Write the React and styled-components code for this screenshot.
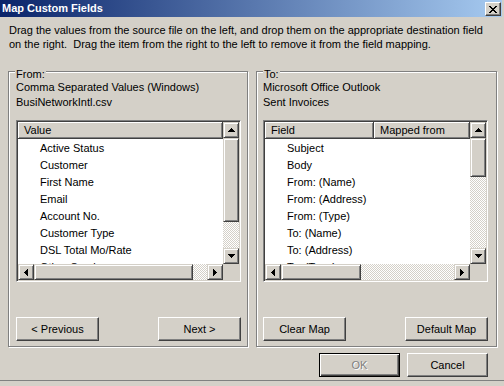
import React from "react";
import styled, { createGlobalStyle } from "styled-components";

const GlobalStyle = createGlobalStyle`
  html, body {
    margin: 0;
    padding: 0;
    background: #d4d0c8;
  }
  body {
    font-family: "Liberation Sans", Arial, sans-serif;
    font-size: 11px;
    color: #000;
  }
`;

const Window = styled.div`
  width: 504px;
  box-sizing: border-box;
  padding-right: 2px;
  background: #d4d0c8;
  border-bottom: 1px solid #808080;
  box-shadow: 0 1px 0 #404040;
  display: flex;
  flex-direction: column;
`;

const TitleBar = styled.div`
  height: 17px;
  display: flex;
  justify-content: space-between;
  padding: 0 1px 0 2px;
  background: linear-gradient(to right, #0a246a, #a6caf0);
  color: #fff;
  font-weight: bold;
  line-height: 17px;
`;

const CloseButton = styled.div`
  width: 16px;
  height: 14px;
  margin-top: 2px;
  box-sizing: border-box;
  background: #d4d0c8;
  border: 1px solid;
  border-color: #fff #404040 #404040 #fff;
  box-shadow: inset -1px -1px #808080;
  display: flex;
  align-items: center;
  justify-content: center;
`;

const Intro = styled.p`
  margin: 0;
  padding: 6px 9px 0;
  line-height: 14px;
`;

const GroupRow = styled.div`
  display: flex;
  gap: 8px;
  margin-top: 20px;
  padding-left: 8px;
`;

const Group = styled.div`
  position: relative;
  width: ${(p) => p.$width}px;
  height: 276px;
  box-sizing: border-box;
  border: 1px solid #808080;
  box-shadow: inset 1px 1px #fff, 1px 1px #fff;
  padding: 8px ${(p) => p.$right}px 5px ${(p) => p.$left}px;
  display: flex;
  flex-direction: column;
`;

const Legend = styled.span`
  position: absolute;
  top: -4px;
  left: 6px;
  padding: 0 1px;
  line-height: 12px;
  background: #d4d0c8;
`;

const SourceLine = styled.div`
  line-height: 15px;
  white-space: nowrap;
`;

const ListBox = styled.div`
  margin-top: 10px;
  height: 162px;
  box-sizing: border-box;
  border: 1px solid;
  border-color: #808080 #fff #fff #808080;
  padding: 1px;
  box-shadow: inset 1px 1px #404040, inset -1px -1px #d4d0c8;
  background: #fff;
  display: grid;
  grid-template-columns: 1fr 16px;
  grid-template-rows: 1fr 16px;
`;

const ListArea = styled.div`
  min-height: 0;
  overflow: hidden;
  display: flex;
  flex-direction: column;
`;

const Header = styled.div`
  display: flex;
  height: 17px;
  flex: none;
  margin-bottom: 1px;
`;

const HeaderCell = styled.div`
  flex: ${(p) => (p.$width ? `0 0 ${p.$width}px` : "1")};
  box-sizing: border-box;
  padding-left: 6px;
  background: #d4d0c8;
  border-right: 1px solid #404040;
  border-bottom: 1px solid #404040;
  box-shadow: inset 1px 1px #fff, inset -1px -1px #808080;
  line-height: 16px;
  white-space: nowrap;
`;

const Item = styled.div`
  height: 17px;
  flex: none;
  line-height: 17px;
  padding-left: 22px;
  white-space: nowrap;
`;

const ScrollBar = styled.div`
  display: flex;
  flex-direction: ${(p) => (p.$vertical ? "column" : "row")};
`;

const ScrollButton = styled.div`
  flex: none;
  width: 16px;
  height: 16px;
  box-sizing: border-box;
  background: #d4d0c8;
  border: 1px solid;
  border-color: #d4d0c8 #404040 #404040 #d4d0c8;
  box-shadow: inset 1px 1px #fff, inset -1px -1px #808080;
  display: flex;
  align-items: center;
  justify-content: center;
`;

const Thumb = styled(ScrollButton)`
  width: ${(p) => (p.$vertical ? "16px" : `${p.$size}px`)};
  height: ${(p) => (p.$vertical ? `${p.$size}px` : "16px")};
`;

const Track = styled.div`
  flex: 1;
  background-color: #fff;
  background-image: conic-gradient(#d4d0c8 25%, #fff 0 50%, #d4d0c8 0 75%, #fff 0);
  background-size: 2px 2px;
`;

const Corner = styled.div`
  background: #d4d0c8;
`;

const ButtonRow = styled.div`
  margin-top: auto;
  display: flex;
  justify-content: space-between;
`;

const Button = styled.div`
  width: ${(p) => p.$width}px;
  height: 24px;
  box-sizing: border-box;
  background: #d4d0c8;
  border: 1px solid;
  border-color: ${(p) => (p.$default ? "#000" : "#fff #404040 #404040 #fff")};
  box-shadow: ${(p) =>
    p.$default
      ? "inset 1px 1px #fff, inset -1px -1px #404040, inset -2px -2px #808080"
      : "inset -1px -1px #808080"};
  color: ${(p) => (p.$disabled ? "#808080" : "#000")};
  text-shadow: ${(p) => (p.$disabled ? "1px 1px #fff" : "none")};
  display: flex;
  align-items: center;
  justify-content: center;
  white-space: nowrap;
`;

const Footer = styled.div`
  display: flex;
  justify-content: flex-end;
  gap: 7px;
  padding: 6px 14px 3px 0;
`;

const arrowPaths = {
  up: { w: 7, h: 4, d: "M3 0h1v1h1v1h1v1h1v1H0V3h1V2h1V1h1z" },
  down: { w: 7, h: 4, d: "M0 0h7v1H6v1H5v1H4v1H3V3H2V2H1V1H0z" },
  left: { w: 4, h: 7, d: "M3 0h1v7H3V6H2V5H1V4H0V3h1V2h1V1h1z" },
  right: { w: 4, h: 7, d: "M0 0h1v1h1v1h1v1h1v1H3v1H2v1H1v1H0z" },
};

const Arrow = ({ dir }) => {
  const a = arrowPaths[dir];
  return (
    <svg width={a.w} height={a.h} viewBox={`0 0 ${a.w} ${a.h}`} shapeRendering="crispEdges">
      <path d={a.d} fill="#000" />
    </svg>
  );
};

const CloseGlyph = () => {
  const rows = ["XX....XX", ".XX..XX.", "..XXXX..", "...XX...", "..XXXX..", ".XX..XX.", "XX....XX"];
  return (
    <svg width="8" height="7" viewBox="0 0 8 7" shapeRendering="crispEdges">
      {rows.flatMap((r, y) =>
        r.split("").map((c, x) => (c === "X" ? <rect key={`${x}-${y}`} x={x} y={y} width="1" height="1" fill="#000" /> : null))
      )}
    </svg>
  );
};

const VScroll = ({ thumb }) => (
  <ScrollBar $vertical>
    <ScrollButton>
      <Arrow dir="up" />
    </ScrollButton>
    <Thumb $vertical $size={thumb} />
    <Track />
    <ScrollButton>
      <Arrow dir="down" />
    </ScrollButton>
  </ScrollBar>
);

const HScroll = ({ thumb }) => (
  <ScrollBar>
    <ScrollButton>
      <Arrow dir="left" />
    </ScrollButton>
    <Thumb $size={thumb} />
    <Track />
    <ScrollButton>
      <Arrow dir="right" />
    </ScrollButton>
  </ScrollBar>
);

const FieldList = ({ columns, items, vThumb, hThumb }) => (
  <ListBox>
    <ListArea>
      <Header>
        {columns.map((c) => (
          <HeaderCell key={c.label} $width={c.width}>
            {c.label}
          </HeaderCell>
        ))}
      </Header>
      {items.map((item) => (
        <Item key={item}>{item}</Item>
      ))}
    </ListArea>
    <VScroll thumb={vThumb} />
    <HScroll thumb={hThumb} />
    <Corner />
  </ListBox>
);

const sourceItems = [
  "Active Status",
  "Customer",
  "First Name",
  "Email",
  "Account No.",
  "Customer Type",
  "DSL Total Mo/Rate",
  "Other Services",
];

const targetItems = [
  "Subject",
  "Body",
  "From: (Name)",
  "From: (Address)",
  "From: (Type)",
  "To: (Name)",
  "To: (Address)",
  "To: (Type)",
];

export default function App() {
  return (
    <>
      <GlobalStyle />
      <Window>
        <TitleBar>
          <span>Map Custom Fields</span>
          <CloseButton>
            <CloseGlyph />
          </CloseButton>
        </TitleBar>
        <Intro>
          Drag the values from the source file on the left, and drop them on the appropriate destination field
          <br />
          on the right.&nbsp; Drag the item from the right to the left to remove it from the field mapping.
        </Intro>
        <GroupRow>
          <Group $width={240} $left={7} $right={6}>
            <Legend>From:</Legend>
            <SourceLine>Comma Separated Values (Windows)</SourceLine>
            <SourceLine>BusiNetworkIntl.csv</SourceLine>
            <FieldList columns={[{ label: "Value" }]} items={sourceItems} vThumb={84} hThumb={159} />
            <ButtonRow>
              <Button $width={83}>&lt; Previous</Button>
              <Button $width={83}>Next &gt;</Button>
            </ButtonRow>
          </Group>
          <Group $width={241} $left={6} $right={8}>
            <Legend>To:</Legend>
            <SourceLine>Microsoft Office Outlook</SourceLine>
            <SourceLine>Sent Invoices</SourceLine>
            <FieldList
              columns={[{ label: "Field", width: 109 }, { label: "Mapped from" }]}
              items={targetItems}
              vThumb={39}
              hThumb={80}
            />
            <ButtonRow>
              <Button $width={83}>Clear Map</Button>
              <Button $width={83}>Default Map</Button>
            </ButtonRow>
          </Group>
        </GroupRow>
        <Footer>
          <Button $width={81} $default $disabled>
            OK
          </Button>
          <Button $width={81}>Cancel</Button>
        </Footer>
      </Window>
    </>
  );
}
